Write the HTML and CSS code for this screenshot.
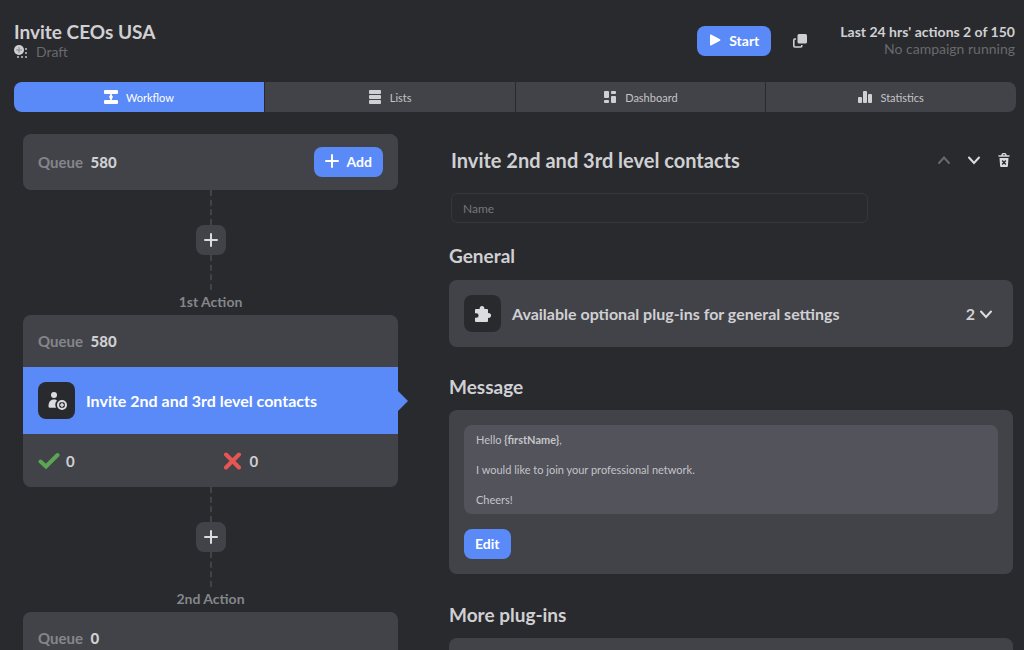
FILE: index.html
```
<!DOCTYPE html>
<html lang="en">
<head>
    <meta charset="UTF-8">
    <meta name="viewport" content="width=device-width, initial-scale=1.0">
    <title>Invite CEOs USA</title>
    <link rel="stylesheet" href="styles.css">
</head>
<body>
    <header class="header">
        <div class="campaign">
            <h1>Invite CEOs USA</h1>
            <div class="status">
                <svg width="16" height="14" viewBox="0 0 16 14">
                    <circle cx="5" cy="5" r="5" fill="#d0d0d2"/>
                    <path d="M5 2v6M2 5h6" stroke="#85868a" stroke-width="1"/>
                    <g fill="#c4c4c6">
                        <circle cx="12" cy="4" r="1"/><circle cx="12" cy="8" r="1"/><circle cx="12" cy="12" r="1"/>
                        <circle cx="8" cy="12" r="1"/><circle cx="4" cy="12" r="1"/>
                    </g>
                </svg>
                <span>Draft</span>
            </div>
        </div>
        <div class="header-actions">
            <button class="btn btn-start">
                <svg width="12" height="12" viewBox="0 0 12 12"><path d="M1 1.2v9.6q0 1 1 .6L11 6.700q1-.7 0-1.400L2 .6Q1 .2 1 1.200z" fill="#fff"/></svg>
                Start
            </button>
            <button class="icon-btn" aria-label="Duplicate">
                <svg width="14" height="14" viewBox="0 0 14 14">
                    <rect x="4.500" y="0" width="9.500" height="9.500" rx="1.500" fill="#cfcfd1"/>
                    <path d="M3 5H1.800q-1 0-1 1v6q0 1 1 1h6q1 0 1-1v-1" fill="none" stroke="#cfcfd1" stroke-width="1.600"/>
                </svg>
            </button>
            <div class="usage">
                <strong>Last 24 hrs' actions 2 of 150</strong>
                <span>No campaign running</span>
            </div>
        </div>
    </header>

    <nav class="tabs">
        <a href="#workflow" class="tab active">
            <svg width="14" height="14" viewBox="0 0 14 14" fill="#fff"><rect width="14" height="4" rx="1"/><rect y="10" width="14" height="4" rx="1"/><path d="M6.200 3h1.600v2L9 7 7.800 9v2H6.200V9L5 7l1.200-2z"/></svg>
            Workflow
        </a>
        <a href="#lists" class="tab">
            <svg width="14" height="14" viewBox="0 0 14 14" fill="#d0d0d3"><rect x="1" width="12" height="4" rx="1"/><rect x="1" y="5" width="12" height="4" rx="1"/><rect x="1" y="10" width="12" height="4" rx="1"/></svg>
            Lists
        </a>
        <a href="#dashboard" class="tab">
            <svg width="14" height="14" viewBox="0 0 14 14" fill="#d0d0d3"><rect x="1" y="1" width="5" height="7" rx="1"/><rect x="1" y="10" width="5" height="3" rx="1"/><rect x="8" y="1" width="5" height="3" rx="1"/><rect x="8" y="6" width="5" height="7" rx="1"/></svg>
            Dashboard
        </a>
        <a href="#statistics" class="tab">
            <svg width="14" height="14" viewBox="0 0 14 14" fill="#d0d0d3"><rect x="0" y="7" width="4" height="6" rx="1"/><rect x="5" y="1" width="4" height="12" rx="1"/><rect x="10" y="4" width="4" height="9" rx="1"/></svg>
            Statistics
        </a>
    </nav>

    <main class="layout">
        <section class="workflow">
            <div class="card queue-card">
                <div class="queue">Queue <strong>580</strong></div>
                <button class="btn btn-add">
                    <svg width="14" height="14" viewBox="0 0 14 14"><path d="M7 1v12M1 7h12" stroke="#fff" stroke-width="2" stroke-linecap="round"/></svg>
                    Add
                </button>
            </div>

            <div class="connector">
                <span class="line"></span>
                <button class="insert-btn" aria-label="Insert action">
                    <svg width="14" height="14" viewBox="0 0 14 14"><path d="M7 1v12M1 7h12" stroke="#dcdcde" stroke-width="2" stroke-linecap="round"/></svg>
                </button>
                <span class="line"></span>
                <span class="step">1st Action</span>
            </div>

            <div class="card">
                <div class="row">
                    <div class="queue">Queue <strong>580</strong></div>
                </div>
                <div class="action">
                    <span class="tile">
                        <svg width="20" height="20" viewBox="0 0 20 20">
                            <circle cx="7" cy="4" r="3" fill="#dcdcde"/>
                            <path d="M1.500 15.500c0-4.500 2-7 5.500-7 1.500 0 2.500.4 3 1.200-1.800 1.500-2.300 4-1 7H3q-1.500 0-1.500-1.200z" fill="#dcdcde"/>
                            <circle cx="15" cy="14" r="4" fill="none" stroke="#dcdcde" stroke-width="2"/>
                            <path d="M15 11.800v4.400M12.800 14h4.400" stroke="#dcdcde" stroke-width="1.500"/>
                        </svg>
                    </span>
                    Invite 2nd and 3rd level contacts
                </div>
                <div class="row results">
                    <div class="result">
                        <svg width="22" height="18" viewBox="0 0 22 18"><path d="M2.500 9.500l5.500 5L19.500 3" fill="none" stroke="#5ca653" stroke-width="4" stroke-linecap="round"/></svg>
                        0
                    </div>
                    <div class="result">
                        <svg width="22" height="18" viewBox="0 0 22 18"><path d="M4 2.500l13 13M17 2.500l-13 13" stroke="#e65653" stroke-width="4" stroke-linecap="round"/></svg>
                        0
                    </div>
                </div>
            </div>

            <div class="connector">
                <span class="line"></span>
                <button class="insert-btn" aria-label="Insert action">
                    <svg width="14" height="14" viewBox="0 0 14 14"><path d="M7 1v12M1 7h12" stroke="#dcdcde" stroke-width="2" stroke-linecap="round"/></svg>
                </button>
                <span class="line"></span>
                <span class="step">2nd Action</span>
            </div>

            <div class="card">
                <div class="row">
                    <div class="queue">Queue <strong>0</strong></div>
                </div>
            </div>
        </section>

        <section class="details">
            <div class="details-header">
                <h2>Invite 2nd and 3rd level contacts</h2>
                <div class="tools">
                    <button class="icon-btn" aria-label="Move up">
                        <svg width="14" height="14" viewBox="0 0 14 14"><path d="M2 10l5-5.500 5 5.500" fill="none" stroke="#68696c" stroke-width="2" stroke-linecap="round"/></svg>
                    </button>
                    <button class="icon-btn" aria-label="Move down">
                        <svg width="14" height="14" viewBox="0 0 14 14"><path d="M2 4.500L7 10l5-5.500" fill="none" stroke="#dcdcde" stroke-width="2" stroke-linecap="round"/></svg>
                    </button>
                    <button class="icon-btn" aria-label="Delete">
                        <svg width="14" height="14" viewBox="0 0 14 14">
                            <path d="M2 3h10M5 2.500q0-2 2-2t2 2" fill="none" stroke="#dcdcde" stroke-width="1.400" stroke-linecap="round"/>
                            <path d="M2.500 5h9l-.6 8q0 1-1 1H4.100q-1 0-1-1z" fill="#dcdcde"/>
                            <path d="M5.200 7.500l3.600 4M8.800 7.500l-3.600 4" stroke="#292a2e" stroke-width="1.400"/>
                        </svg>
                    </button>
                </div>
            </div>

            <input class="name-input" type="text" placeholder="Name" aria-label="Name">

            <h2>General</h2>
            <button class="card plugins">
                <span class="tile">
                    <svg width="20" height="20" viewBox="0 0 20 20"><path d="M3 5h3.700a2.400 2.400 0 1 1 4.600 0H14q1 0 1 1v3.200a2.400 2.400 0 1 1 0 4.600V17q0 1-1 1H3q-1 0-1-1v-3.200h1.300a2.300 2.300 0 0 0 0-4.600H2V6q0-1 1-1z" fill="#dcdcde"/></svg>
                </span>
                <span class="plugins-title">Available optional plug-ins for general settings</span>
                <span class="plugins-count">2
                    <svg width="14" height="14" viewBox="0 0 14 14"><path d="M2 4.500L7 10l5-5.500" fill="none" stroke="#dcdcde" stroke-width="2" stroke-linecap="round"/></svg>
                </span>
            </button>

            <h2>Message</h2>
            <div class="card message">
                <div class="message-text">
                    <p>Hello <b>{firstName}</b>,</p>
                    <p>I would like to join your professional network.</p>
                    <p>Cheers!</p>
                </div>
                <button class="btn">Edit</button>
            </div>

            <h2>More plug-ins</h2>
            <div class="card more"></div>
        </section>
    </main>
</body>
</html>
```
FILE: styles.css
```
* {
    box-sizing: border-box;
}
body {
    background: #292a2e;
    color: #d0d0d3;
    font-family: Lato, 'Open Sans', sans-serif;
    font-size: 14px;
    height: 100vh;
    margin: 0;
    overflow: hidden;
}
svg {
    display: block;
    flex: none;
}
h1, h2 {
    font-size: 19px;
    line-height: 24px;
    font-weight: bold;
    margin: 0;
}
button {
    font-family: inherit;
    border: none;
    cursor: pointer;
}
.header {
    display: flex;
    justify-content: space-between;
    height: 82px;
    padding: 20px 9px 0 14px;
}
.status {
    display: flex;
    align-items: center;
    gap: 6px;
    color: #68696c;
    line-height: 16px;
}
.header-actions {
    display: flex;
    align-items: flex-start;
    padding-top: 3px;
}
.usage {
    display: flex;
    flex-direction: column;
    align-items: flex-end;
    color: #68696c;
    line-height: 17px;
    margin-left: 33px;
}
.usage strong {
    color: #d0d0d3;
}
.btn {
    display: inline-flex;
    align-items: center;
    justify-content: center;
    gap: 8px;
    height: 30px;
    padding: 0 11px 2px;
    background: #5a8af8;
    color: #fff;
    border-radius: 8px;
    font-size: 14px;
    font-weight: bold;
}
.btn-start {
    margin: 3px 22px 0 0;
    padding: 0 12px 2px;
}
.icon-btn {
    display: flex;
    align-items: center;
    justify-content: center;
    background: none;
    padding: 0;
}
.header-actions .icon-btn {
    height: 36px;
}
.tabs {
    display: grid;
    grid-template-columns: repeat(4, 1fr);
    gap: 1px;
    margin: 0 8px 0 14px;
    border-radius: 8px;
    overflow: hidden;
}
.tab {
    display: flex;
    align-items: center;
    justify-content: center;
    gap: 8px;
    height: 30px;
    background: #424349;
    color: #c4c4c8;
    font-size: 11px;
    text-decoration: none;
}
.tab.active {
    background: #5a8af8;
    color: #fff;
}
.layout {
    display: grid;
    grid-template-columns: 375fr 564fr;
    gap: 51px;
    padding: 22px 11px 0 23px;
}
.card {
    background: #424349;
    border-radius: 8px;
}
.queue-card {
    display: flex;
    align-items: center;
    justify-content: space-between;
    height: 56px;
    padding: 0 15px;
}
.queue {
    color: #85868b;
    font-size: 15px;
    font-weight: bold;
}
.queue strong {
    color: #d0d0d3;
    margin-left: 4px;
}
.connector {
    display: flex;
    flex-direction: column;
    align-items: center;
}
.line {
    height: 35px;
    border-left: 2px dashed #424349;
}
.insert-btn {
    display: flex;
    align-items: center;
    justify-content: center;
    width: 30px;
    height: 30px;
    padding: 0;
    background: #424349;
    border-radius: 8px;
}
.step {
    color: #85868b;
    font-size: 14px;
    font-weight: bold;
    line-height: 24px;
    padding-bottom: 1px;
}
.row {
    display: flex;
    align-items: center;
    height: 51px;
    padding: 0 15px;
}
.action {
    position: relative;
    display: flex;
    align-items: center;
    gap: 11px;
    height: 67px;
    margin: 1px 0;
    padding: 0 15px;
    background: #5a8af8;
    color: #fff;
    font-size: 16px;
    font-weight: bold;
}
.action::after {
    content: '';
    position: absolute;
    left: 100%;
    top: 24px;
    border: 10px solid transparent;
    border-left-color: #5a8af8;
    border-right: none;
}
.tile {
    display: flex;
    align-items: center;
    justify-content: center;
    width: 37px;
    height: 37px;
    background: #292a2e;
    border-radius: 8px;
}
.results {
    gap: 22px;
    height: 52px;
}
.result {
    display: flex;
    flex: 1;
    align-items: center;
    gap: 6px;
    font-size: 15px;
    font-weight: bold;
}
.details-header {
    display: flex;
    align-items: center;
    justify-content: space-between;
    height: 52px;
    padding-left: 2px;
}
.details-header h2 {
    font-size: 20px;
}
.tools {
    display: flex;
    gap: 16px;
    padding-right: 2px;
}
.name-input {
    display: block;
    width: 74%;
    height: 30px;
    margin: 7px 0 21px 2px;
    padding: 0 11px;
    background: transparent;
    color: #d0d0d3;
    border: 1px solid #36373b;
    border-radius: 6px;
    font-family: inherit;
    font-size: 12px;
}
.name-input::placeholder {
    color: #75767a;
}
.plugins {
    display: flex;
    align-items: center;
    gap: 11px;
    width: 100%;
    height: 67px;
    margin: 12px 0 28px;
    padding: 0 20px 0 15px;
    color: #d0d0d3;
    font-size: 16px;
    font-weight: bold;
    text-align: left;
}
.plugins-title {
    flex: 1;
}
.plugins-count {
    display: flex;
    align-items: center;
    gap: 4px;
}
.message {
    margin: 11px 0 29px;
    padding: 15px;
}
.message-text {
    margin-bottom: 15px;
    padding: 7px 12px;
    background: #52535b;
    border-radius: 8px;
    color: #c4c4c8;
    font-size: 11px;
    line-height: 15px;
}
.message-text p {
    margin: 0 0 15px;
}
.message-text p:last-child {
    margin-bottom: 0;
}
.more {
    height: 67px;
    margin-top: 11px;
}
```
